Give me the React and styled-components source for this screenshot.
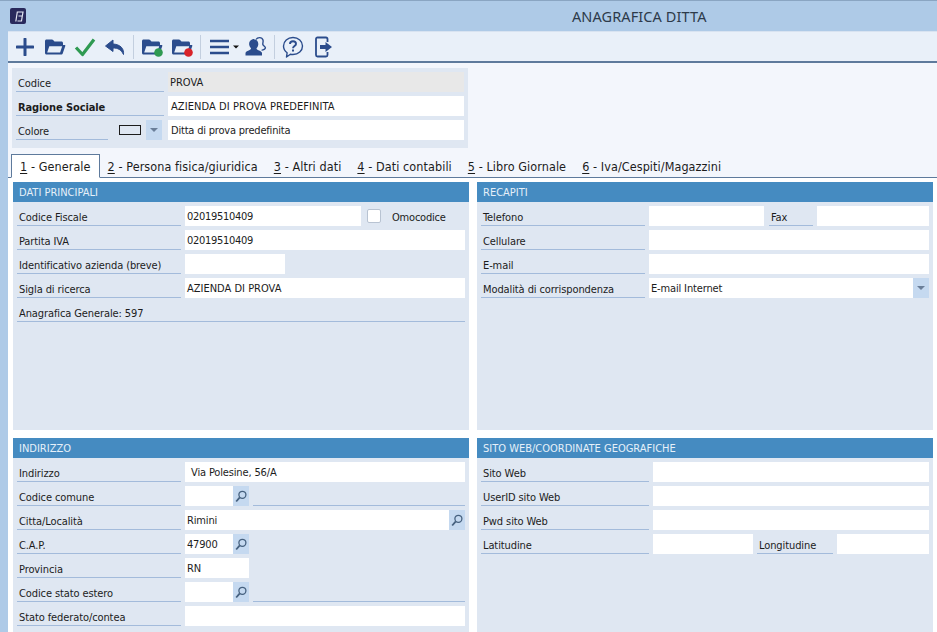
import React from 'react';
import styled, { createGlobalStyle } from 'styled-components';

const Global = createGlobalStyle`
  html, body { margin: 0; padding: 0; background: #aecae7; }
  #root { width: 937px; height: 632px; overflow: hidden; }
  * { box-sizing: border-box; }
`;
const FONT = `"DejaVu Sans Condensed", "Noto Sans", "Liberation Sans", sans-serif`;
const NAVY = '#2b4c8c';

const Shell = styled.div`
  width: 937px; height: 632px; background: #aecae7; font-family: ${FONT};
  font-size: 11px; color: #1c1c1c; overflow: hidden;
`;
const TitleBar = styled.header`
  height: 31px; border-top: 1px solid #8aa5c2; display: flex; align-items: center; position: relative; padding-left: 10px;
`;
const Logo = styled.div`
  width: 16px; height: 16px; border-radius: 2px; background: #29295c; display: flex; align-items: center; justify-content: center;
`;
const Title = styled.h1`
  margin: 0 0 0 546px; font-size: 14.5px; font-weight: 400; color: #2d3a4a; white-space: nowrap; font-family: "Noto Sans", sans-serif; letter-spacing: 0.1px;
`;
const Content = styled.main`
  margin-left: 8px; background: #f3f6fc; height: 601px;
`;
const Toolbar = styled.nav`
  height: 32px; background: #e9f0f9; border-top: 1px solid #d8e3f1; border-bottom: 2px solid #5e7a9c; display: flex; align-items: center; padding-left: 2px;
`;
const ToolButton = styled.div`
  width: ${p => p.$w || 30}px; height: 24px; display: flex; align-items: center; justify-content: center; flex: none; position: relative;
`;
const ToolSep = styled.div`
  width: 1px; height: 24px; background: #c3cfdf; margin: 0 3px; flex: none;
`;
const TopPanel = styled.section`
  margin: 5px 0 0 4px; width: 456px; height: 80px; background: #dfe7f2; padding: 4px; display: flex; flex-direction: column; gap: 4px;
`;
const Row = styled.div`
  display: flex; height: 20px; gap: 4px; flex: none;
`;
const Label = styled.div`
  width: ${p => p.$w}px; flex: none; height: 20px; border-bottom: 1px solid #a3bbdb; padding: 5px 0 0 ${p => p.$pad ?? 2}px;
  white-space: nowrap; font-weight: ${p => p.$bold ? 700 : 400}; line-height: 14px; color: #1c1c1c; letter-spacing: -0.1px;
`;
const Field = styled.div`
  flex: ${p => p.$w ? 'none' : 1}; width: ${p => p.$w ? `${p.$w}px` : 'auto'}; height: 20px; background: ${p => p.$ro ? '#e8e8e8' : '#fff'};
  padding: 4px 0 0 ${p => p.$pad ?? 3}px; line-height: 14px; white-space: nowrap; overflow: hidden;
  letter-spacing: ${p => p.$sp ?? -0.15}px;
`;
const Joined = styled.div`
  display: flex; width: ${p => p.$w ? `${p.$w}px` : 'auto'}; flex: ${p => p.$w ? 'none' : 1};
`;
const SideButton = styled.div`
  width: 16px; height: 20px; background: #c5d9f0; flex: none; display: flex; align-items: center; justify-content: center;
`;
const Arrow = styled.div`
  width: 0; height: 0; border-left: 4px solid transparent; border-right: 4px solid transparent; border-top: 4px solid #6b7f99;
`;
const Swatch = styled.div`
  width: 22px; height: 10px; border: 1px solid #1c1c1c; background: transparent; margin: 5px 5px 0 11px; flex: none;
`;
const ColorPick = styled.div`
  display: flex; margin-left: -4px; margin-right: 2px;
`;
const Tabs = styled.div`
  margin-top: 6px; height: 24px; display: flex; padding-left: 3px; border-bottom: 1px solid #5e7a9c; font-size: 12.5px; align-items: flex-end; letter-spacing: 0.08px;
`;
const Tab = styled.div`
  height: ${p => p.$active ? 24 : 23}px; padding: ${p => p.$active ? '4px 8px 0' : '5px 8px 0'}; white-space: nowrap; line-height: 15px; color: #1c1c1c;
  ${p => p.$active ? 'background:#fff; border:1px solid #5e7a9c; border-bottom:1px solid #fff; margin-bottom:-1px;' : 'margin-left: 0;'}
  u { text-decoration: underline; text-underline-offset: 2px; }
`;
const Body = styled.div`
  background: #fff; padding: 4px 0 0 5px; height: 500px;
`;
const PanelGrid = styled.div`
  display: grid; grid-template-columns: 456px 456px; grid-template-rows: 248px 240px; gap: 8px;
`;
const Panel = styled.section`
  background: #dfe7f2;
`;
const PanelHead = styled.h2`
  margin: 0; height: 20px; background: #458bc1; color: #e6f0f9; font-size: 11px; font-weight: 400; line-height: 21px; padding-left: 6px; white-space: nowrap;
`;
const PanelBody = styled.div`
  padding: 4px; display: flex; flex-direction: column; gap: 4px;
`;
const Check = styled.div`
  width: 14px; height: 14px; margin: 3px 0 0 2px; background: #fff; border: 1px solid #b8c3d2; border-radius: 2px; flex: none;
`;
const CheckLabel = styled.div`
  padding: 5px 0 0 7px; line-height: 14px; white-space: nowrap; letter-spacing: -0.2px;
`;
const Blank = styled.div`
  flex: 1; height: 20px; border-bottom: 1px solid #a3bbdb;
`;

const Plus = () => <svg width="18" height="18" viewBox="0 0 18 18"><path d="M9 1v16M1 9h16" stroke={NAVY} strokeWidth="3" strokeLinecap="round" /></svg>;
const Folder = ({ dot }) => (
  <svg width="22" height="20" viewBox="0 0 22 20">
    <path fillRule="evenodd" fill={NAVY} d="M2.500 2.500h5.500c.5 0 .8.2 1.100.5l1.400 1.500h7c.8 0 1.500.7 1.500 1.500v2h1.500c.7 0 1 .5.800 1.100l-2.600 7.300c-.2.600-.7 1.100-1.400 1.100H2.500c-.8 0-1.500-.7-1.500-1.500V4c0-.8.700-1.500 1.500-1.500zM5.300 9.200L3.200 15.400h12.900l2.100-6.200z" />
    {dot && <circle cx="17.500" cy="15.500" r="4.300" fill={dot} />}
  </svg>
);
const Tick = () => <svg width="22" height="20" viewBox="0 0 22 20"><path d="M2 10.500l6.500 7L20 2.500" fill="none" stroke="#2f9a52" strokeWidth="3.200" strokeLinejoin="round" /></svg>;
const Undo = () => <svg width="22" height="18" viewBox="0 0 22 18"><path d="M9 2L1.500 8 9 13.500V10c5 0 8 1.500 10.500 6.500.7-6-3-10-10.500-10.500z" fill={NAVY} stroke={NAVY} strokeWidth="1" strokeLinejoin="round" /></svg>;
const Menu = () => (
  <svg width="36" height="18" viewBox="0 0 36 18">
    <path d="M5 3h19M5 9h19M5 15h19" stroke={NAVY} strokeWidth="2.600" />
    <path d="M28 7.500h6l-3 3z" fill="#111" />
  </svg>
);
const User = () => (
  <svg width="22" height="22" viewBox="0 0 22 22">
    <path d="M11 3.500C12.500 1 17 .8 18 4c.5 1.800-.4 3-.2 4.400.2 1.300 2.600 2 2.600 3.400 0 1.300-2 2.400-3.800 2.300" fill="none" stroke={NAVY} strokeWidth="1.400" />
    <path d="M9.200 3.500c3 0 4.500 2.500 4 5.500-.2 1.500-1 2.700-1.700 3.300 0 1 .8 1.500 2.500 2.200 1.800.7 2.800 1.500 3 2.500v2.500H.500V17c.2-1.200 1.500-2 3.200-2.600 1.500-.6 2.300-1.100 2.300-2.100-.8-.8-1.600-2-1.800-3.500-.4-3 1.500-5.800 5-5.800z" fill={NAVY} />
  </svg>
);
const Help = () => (
  <svg width="22" height="22" viewBox="0 0 22 22">
    <path d="M11 1.500c5.400 0 9.500 3.700 9.500 8.500s-4.100 8.500-9.500 8.500c-.9 0-1.800-.1-2.600-.3L4.500 21l.6-4.200C2.900 15.200 1.500 12.800 1.500 10 1.500 5.200 5.600 1.500 11 1.500z" fill="none" stroke={NAVY} strokeWidth="1.400" strokeLinejoin="round" />
    <path d="M8 8c0-1.800 1.300-2.700 3-2.700S14 6.300 14 7.900c0 2-3 2.300-3 4.300" fill="none" stroke={NAVY} strokeWidth="1.900" />
    <rect x="10" y="13.500" width="2" height="2" fill={NAVY} />
  </svg>
);
const Exit = () => (
  <svg width="20" height="22" viewBox="0 0 20 22">
    <path d="M14.500 6V3c0-.8-.6-1.500-1.500-1.500H4.500C3.700 1.500 3 2.200 3 3v16c0 .8.700 1.500 1.500 1.500H13c.9 0 1.500-.7 1.500-1.500v-3" fill="none" stroke={NAVY} strokeWidth="1.800" />
    <path d="M7 9h5.500V6L19 11l-6.500 5v-3H7z" fill={NAVY} />
  </svg>
);
const Search = () => (
  <svg width="12" height="13" viewBox="0 0 12 13">
    <circle cx="7.400" cy="4.800" r="3.500" fill="none" stroke="#46617f" strokeWidth="1.300" />
    <path d="M4.800 7.400L1.200 11.500" stroke="#46617f" strokeWidth="1.800" />
  </svg>
);

const LookupButton = () => <SideButton><Search /></SideButton>;
const DropButton = () => <SideButton><Arrow /></SideButton>;

export default function App() {
  return (
    <Shell>
      <Global />
      <TitleBar>
        <Logo>
          <svg width="12" height="11" viewBox="0 0 12 11"><path d="M3.800 10.500L5.300 1H11L10.300 5H6.500M10.300 5L9.500 10H5.500" fill="none" stroke="#e4e6f2" strokeWidth="1.200" /></svg>
        </Logo>
        <Title>ANAGRAFICA DITTA</Title>
      </TitleBar>
      <Content>
        <Toolbar>
          <ToolButton><Plus /></ToolButton>
          <ToolButton><Folder /></ToolButton>
          <ToolButton><Tick /></ToolButton>
          <ToolButton><Undo /></ToolButton>
          <ToolSep />
          <ToolButton><Folder dot="#2f9a52" /></ToolButton>
          <ToolButton><Folder dot="#d8232a" /></ToolButton>
          <ToolSep />
          <ToolButton $w={37}><Menu /></ToolButton>
          <ToolButton><User /></ToolButton>
          <ToolSep />
          <ToolButton><Help /></ToolButton>
          <ToolButton><Exit /></ToolButton>
        </Toolbar>
        <TopPanel>
          <Row><Label $w={148}>Codice</Label><Field $ro $sp={0} $pad={2}>PROVA</Field></Row>
          <Row><Label $w={148} $bold>Ragione Sociale</Label><Field $sp={0.08}>AZIENDA DI PROVA PREDEFINITA</Field></Row>
          <Row>
            <Label $w={92}>Colore</Label>
            <ColorPick><Swatch /><DropButton /></ColorPick>
            <Field $sp={-0.2}>Ditta di prova predefinita</Field>
          </Row>
        </TopPanel>
        <Tabs>
          <Tab $active><u>1</u> - Generale</Tab>
          <Tab><u>2</u> - Persona fisica/giuridica</Tab>
          <Tab><u>3</u> - Altri dati</Tab>
          <Tab><u>4</u> - Dati contabili</Tab>
          <Tab><u>5</u> - Libro Giornale</Tab>
          <Tab><u>6</u> - Iva/Cespiti/Magazzini</Tab>
        </Tabs>
        <Body>
          <PanelGrid>
            <Panel>
              <PanelHead>DATI PRINCIPALI</PanelHead>
              <PanelBody>
                <Row>
                  <Label $w={164}>Codice Fiscale</Label>
                  <Field $w={176} $sp={-0.3} $pad={2}>02019510409</Field>
                  <Check />
                  <CheckLabel>Omocodice</CheckLabel>
                </Row>
                <Row><Label $w={164}>Partita IVA</Label><Field $sp={-0.3} $pad={2}>02019510409</Field></Row>
                <Row><Label $w={164}>Identificativo azienda (breve)</Label><Field $w={100} /></Row>
                <Row><Label $w={164}>Sigla di ricerca</Label><Field $sp={0} $pad={2}>AZIENDA DI PROVA</Field></Row>
                <Row><Label $w={448}>Anagrafica Generale: 597</Label></Row>
              </PanelBody>
            </Panel>
            <Panel>
              <PanelHead>RECAPITI</PanelHead>
              <PanelBody>
                <Row>
                  <Label $w={164}>Telefono</Label>
                  <Field $w={115} />
                  <Label $w={44} style={{ marginLeft: 1 }}>Fax</Label>
                  <Field />
                </Row>
                <Row><Label $w={164}>Cellulare</Label><Field /></Row>
                <Row><Label $w={164}>E-mail</Label><Field /></Row>
                <Row>
                  <Label $w={164}>Modalità di corrispondenza</Label>
                  <Joined><Field $pad={2}>E-mail Internet</Field><DropButton /></Joined>
                </Row>
              </PanelBody>
            </Panel>
            <Panel>
              <PanelHead>INDIRIZZO</PanelHead>
              <PanelBody>
                <Row><Label $w={164}>Indirizzo</Label><Field $pad={6}>Via Polesine, 56/A</Field></Row>
                <Row>
                  <Label $w={164}>Codice comune</Label>
                  <Joined $w={64}><Field /><LookupButton /></Joined>
                  <Blank />
                </Row>
                <Row>
                  <Label $w={164}>Citta/Località</Label>
                  <Joined><Field $pad={2}>Rimini</Field><LookupButton /></Joined>
                </Row>
                <Row>
                  <Label $w={164}>C.A.P.</Label>
                  <Joined $w={64}><Field $sp={-0.2} $pad={2}>47900</Field><LookupButton /></Joined>
                </Row>
                <Row><Label $w={164}>Provincia</Label><Field $w={64} $pad={2}>RN</Field></Row>
                <Row>
                  <Label $w={164}>Codice stato estero</Label>
                  <Joined $w={64}><Field /><LookupButton /></Joined>
                  <Blank />
                </Row>
                <Row><Label $w={164}>Stato federato/contea</Label><Field /></Row>
              </PanelBody>
            </Panel>
            <Panel>
              <PanelHead>SITO WEB/COORDINATE GEOGRAFICHE</PanelHead>
              <PanelBody>
                <Row><Label $w={168}>Sito Web</Label><Field /></Row>
                <Row><Label $w={168}>UserID sito Web</Label><Field /></Row>
                <Row><Label $w={168}>Pwd sito Web</Label><Field /></Row>
                <Row>
                  <Label $w={168}>Latitudine</Label>
                  <Field $w={100} />
                  <Label $w={76}>Longitudine</Label>
                  <Field />
                </Row>
              </PanelBody>
            </Panel>
          </PanelGrid>
        </Body>
      </Content>
    </Shell>
  );
}
